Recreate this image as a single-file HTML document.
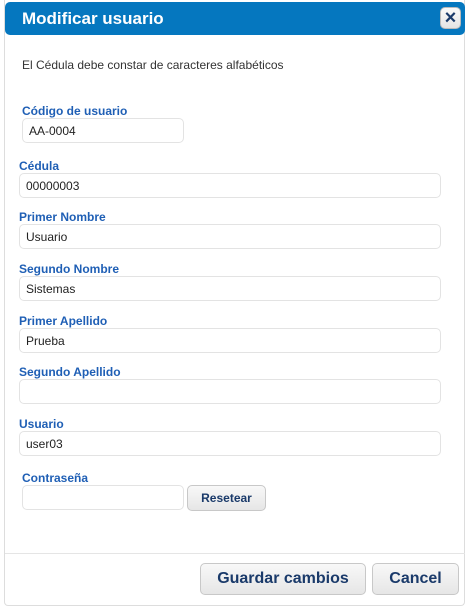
<!DOCTYPE html><html><head><style>
body{margin:0;width:466px;height:607px;background:#fff;font-family:"Liberation Sans",Arial,sans-serif;position:relative;overflow:hidden}
.dlg{position:absolute;left:4px;top:0;width:461px;height:606px;border:1px solid #ddd;border-top:none;border-radius:0 0 4px 4px;box-sizing:border-box}
.hd{position:absolute;left:5px;top:2px;width:460px;height:33px;background:#0577bf;border-radius:5px}
.hd h1{margin:0;position:absolute;left:17px;top:7px;font-size:17px;color:#fff;font-weight:bold}
.x{position:absolute;right:4px;top:5px;width:21px;height:22px;background:linear-gradient(#fafafa,#e4e4e4);border-radius:5px;border:1px solid #bbb;box-sizing:border-box;font-size:20px;font-weight:bold;color:#1a3a6a;text-align:center;line-height:20px}
.msg{position:absolute;left:22px;top:58px;font-size:12px;color:#333}
.lb{position:absolute;font-size:12px;font-weight:bold;color:#1f5fb5}
.in{position:absolute;height:25px;border:1px solid #e3e3e3;border-radius:5px;box-sizing:border-box;font-size:12px;color:#222;padding:5px 0 0 6px}
.bt{position:absolute;border:1px solid #c8c8c8;border-radius:5px;background:linear-gradient(#f8f8f8,#e6e6e6);box-sizing:border-box;text-align:center;font-weight:bold;color:#1a3a6a}
.line{position:absolute;left:5px;top:553px;width:460px;border-top:1px solid #e5e5e5}
</style></head><body>
<div class="dlg"></div>
<div class="hd"><h1>Modificar usuario</h1><div class="x">×</div></div>
<div class="msg">El Cédula debe constar de caracteres alfabéticos</div>
<div class="lb" style="left:22px;top:104px">Código de usuario</div>
<div class="in" style="left:22px;top:118px;width:162px">AA-0004</div>
<div class="lb" style="left:19px;top:159px">Cédula</div>
<div class="in" style="left:19px;top:173px;width:422px">00000003</div>
<div class="lb" style="left:19px;top:210px">Primer Nombre</div>
<div class="in" style="left:19px;top:224px;width:422px">Usuario</div>
<div class="lb" style="left:19px;top:262px">Segundo Nombre</div>
<div class="in" style="left:19px;top:276px;width:422px">Sistemas</div>
<div class="lb" style="left:19px;top:314px">Primer Apellido</div>
<div class="in" style="left:19px;top:328px;width:422px">Prueba</div>
<div class="lb" style="left:19px;top:365px">Segundo Apellido</div>
<div class="in" style="left:19px;top:379px;width:422px"></div>
<div class="lb" style="left:19px;top:417px">Usuario</div>
<div class="in" style="left:19px;top:431px;width:422px">user03</div>
<div class="lb" style="left:22px;top:471px">Contraseña</div>
<div class="in" style="left:22px;top:485px;width:162px"></div>
<div class="bt" style="left:187px;top:485px;width:79px;height:26px;font-size:12px;line-height:24px">Resetear</div>
<div class="line"></div>
<div class="bt" style="left:200px;top:563px;width:166px;height:32px;font-size:16px;line-height:30px">Guardar cambios</div>
<div class="bt" style="left:372px;top:563px;width:87px;height:32px;font-size:16px;line-height:30px">Cancel</div>
</body></html>
